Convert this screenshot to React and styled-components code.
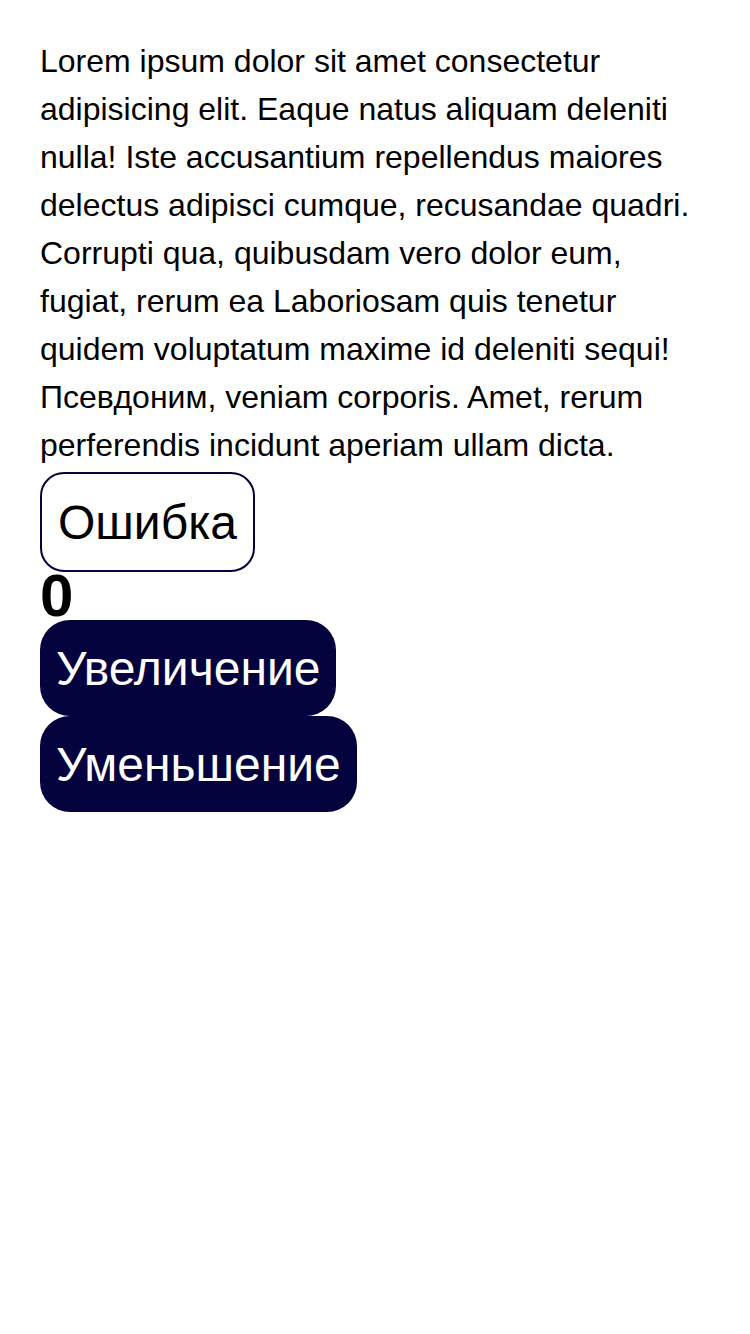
import styled, { createGlobalStyle } from "styled-components";
import { useState } from "react";

const GlobalStyle = createGlobalStyle`
  body {
    margin: 0;
    font-family: "Liberation Sans", Arial, sans-serif;
    background: #fff;
    color: #000;
  }
`;

export default function App() {
  const [count, setCount] = useState(0);

  return (
    <Page>
      <GlobalStyle />
      <Text>
        Lorem ipsum dolor sit amet consectetur adipisicing elit. Eaque natus
        aliquam deleniti nulla! Iste accusantium repellendus maiores delectus
        adipisci cumque, recusandae quadri. Corrupti qua, quibusdam vero dolor
        eum, fugiat, rerum ea Laboriosam quis tenetur quidem voluptatum maxime
        id deleniti sequi! Псевдоним, veniam corporis. Amet, rerum perferendis
        incidunt aperiam ullam dicta.
      </Text>
      <Button $outline>Ошибка</Button>
      <Counter>{count}</Counter>
      <Button onClick={() => setCount(count + 1)}>Увеличение</Button>
      <Button onClick={() => setCount(count - 1)}>Уменьшение</Button>
    </Page>
  );
}

const Page = styled.div`
  display: flex;
  flex-direction: column;
  align-items: flex-start;
  padding: 37px 40px;
`;

const Text = styled.p`
  margin: 0 0 3px;
  font-size: 32px;
  line-height: 48px;
`;

const Button = styled.button`
  font-family: "Liberation Sans", Arial, sans-serif;
  font-size: 48px;
  padding: 0 16px;
  height: ${({ $outline }) => ($outline ? "100px" : "96px")};
  border-radius: ${({ $outline }) => ($outline ? "24px" : "30px")};
  border: ${({ $outline }) => ($outline ? "2px solid #05033d" : "none")};
  background: ${({ $outline }) => ($outline ? "#fff" : "#05033d")};
  color: ${({ $outline }) => ($outline ? "#000" : "#fff")};
  cursor: pointer;
`;

const Counter = styled.div`
  font-size: 60px;
  font-weight: bold;
  line-height: 48px;
`;
